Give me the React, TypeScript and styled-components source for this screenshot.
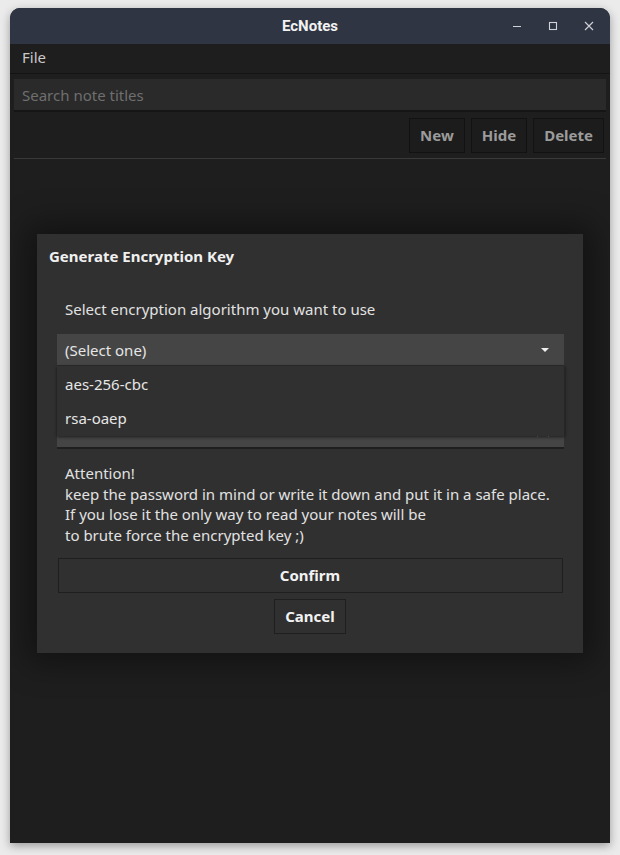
import React from "react";
import styled, { createGlobalStyle } from "styled-components";

const Global = createGlobalStyle`
  html, body { margin: 0; padding: 0; background: #ebebeb; }
  * { box-sizing: border-box; }
  body { font-family: "Noto Sans", "Open Sans", sans-serif; }
`;

const Page = styled.div`
  width: 620px;
  height: 855px;
  padding: 8px 10px 12px 10px;
`;

const Window = styled.div`
  width: 600px;
  height: 835px;
  display: flex;
  flex-direction: column;
  border-radius: 10px 10px 0 0;
  overflow: hidden;
  background: #1e1e1e;
  box-shadow: 0 3px 10px rgba(0, 0, 0, 0.35);
`;

const TitleBar = styled.div`
  height: 36px;
  flex: none;
  background: #303544;
  display: grid;
  grid-template-columns: 1fr auto 1fr;
  align-items: center;
`;

const Title = styled.div`
  grid-column: 2;
  font-family: Roboto, "Noto Sans", sans-serif;
  font-weight: 700;
  font-size: 15px;
  color: #f2f2f2;
`;

const Controls = styled.div`
  grid-column: 3;
  justify-self: end;
  display: flex;
  align-items: center;
  gap: 20px;
  padding-right: 13px;
`;

const CtrlIcon = styled.svg`
  width: 16px;
  height: 16px;
  display: block;
`;

const MenuBar = styled.div`
  height: 30px;
  flex: none;
  display: flex;
  align-items: center;
  padding: 0 0 3px 12px;
  border-bottom: 1px solid #141414;
  font-size: 15px;
  color: #c9c9c9;
`;

const Body = styled.div`
  flex: 1;
  display: flex;
  flex-direction: column;
  padding: 5px 4px 0 4px;
`;

const Search = styled.div`
  height: 33px;
  background: #2a2a2a;
  border-bottom: 2px solid #151515;
  display: flex;
  align-items: center;
  padding-left: 8px;
  font-size: 15px;
  color: #6f6f6f;
`;

const Toolbar = styled.div`
  display: flex;
  justify-content: flex-end;
  gap: 6px;
  padding: 6px 2px 0 0;
`;

const ToolButton = styled.div`
  height: 35px;
  display: flex;
  align-items: center;
  padding: 0 10px 1px;
  background: #1c1c1c;
  border: 1px solid #121212;
  font-size: 15px;
  font-weight: 700;
  color: #9b9b9b;
`;

const Separator = styled.div`
  height: 1px;
  background: #3a3a3a;
  margin-top: 5px;
`;

const Content = styled.div`
  flex: 1;
  display: flex;
  justify-content: center;
  padding-top: 75px;
`;

const Modal = styled.div`
  width: 546px;
  height: 419px;
  background: #303030;
  box-shadow: 0 0 30px 10px rgba(0, 0, 0, 0.4);
  padding: 12px 0 0 0;
  display: flex;
  flex-direction: column;
`;

const ModalTitle = styled.div`
  font-size: 15px;
  line-height: 20px;
  font-weight: 700;
  color: #f0f0f0;
  padding-left: 12px;
`;

const Form = styled.div`
  display: flex;
  flex-direction: column;
  padding: 33px 19px 0 20px;
`;

const Text = styled.div`
  font-size: 15px;
  line-height: 20px;
  color: #e2e2e2;
  padding-left: 8px;
`;

const SelectWrap = styled.div`
  position: relative;
  margin-top: 15px;
`;

const SelectBox = styled.div`
  height: 32px;
  background: #454545;
  border-bottom: 1px solid #2c2c2c;
  display: flex;
  align-items: center;
  justify-content: space-between;
  padding: 0 14px 0 8px;
  font-size: 15px;
  color: #e6e6e6;
`;

const Caret = styled.svg`
  width: 10px;
  height: 6px;
  display: block;
`;

const Dropdown = styled.div`
  position: absolute;
  left: 0;
  right: -1px;
  top: 32px;
  height: 70px;
  background: #303030;
  box-shadow: 0 1px 3px rgba(0, 0, 0, 0.6);
  border-right: 1px solid #262626;
  z-index: 2;
  display: flex;
  flex-direction: column;
  padding-top: 1px;
`;

const Option = styled.div`
  height: 34px;
  display: flex;
  align-items: center;
  padding-left: 8px;
  font-size: 15px;
  color: #e6e6e6;
`;

const PasswordField = styled.div`
  height: 32px;
  margin-top: 51px;
  background: #454545;
  border-bottom: 2px solid #1f1f1f;
  display: flex;
  align-items: flex-end;
  justify-content: flex-end;
  padding: 0 14px 6px 0;
`;

const Notice = styled(Text)`
  margin-top: 14px;
  line-height: 20.7px;
`;

const Buttons = styled.div`
  display: flex;
  flex-direction: column;
  align-items: center;
  gap: 6px;
  margin-top: 12px;
`;

const DialogButton = styled.div<{ $wide?: boolean }>`
  height: 35px;
  width: ${(p) => (p.$wide ? "505px" : "auto")};
  padding: 0 10px 1px;
  display: flex;
  align-items: center;
  justify-content: center;
  background: #303030;
  border: 1px solid #1f1f1f;
  font-size: 15px;
  font-weight: 700;
  color: #f2f2f2;
`;

export default function App() {
  return (
    <>
      <Global />
      <Page>
        <Window>
          <TitleBar>
            <Title>EcNotes</Title>
            <Controls>
              <CtrlIcon viewBox="0 0 16 16">
                <path d="M4 8.5h8" stroke="#cfd2d8" strokeWidth="1.2" />
              </CtrlIcon>
              <CtrlIcon viewBox="0 0 16 16">
                <rect x="4.5" y="4.5" width="7" height="7" fill="none" stroke="#cfd2d8" strokeWidth="1.1" />
              </CtrlIcon>
              <CtrlIcon viewBox="0 0 16 16">
                <path d="M4 4l8 8M12 4l-8 8" stroke="#cfd2d8" strokeWidth="1.1" />
              </CtrlIcon>
            </Controls>
          </TitleBar>
          <MenuBar>File</MenuBar>
          <Body>
            <Search>Search note titles</Search>
            <Toolbar>
              <ToolButton>New</ToolButton>
              <ToolButton>Hide</ToolButton>
              <ToolButton>Delete</ToolButton>
            </Toolbar>
            <Separator />
            <Content>
              <Modal>
                <ModalTitle>Generate Encryption Key</ModalTitle>
                <Form>
                  <Text>Select encryption algorithm you want to use</Text>
                  <SelectWrap>
                    <SelectBox>
                      <span>(Select one)</span>
                      <Caret viewBox="0 0 10 6">
                        <path d="M1 1h8L5 5z" fill="#f0f0f0" />
                      </Caret>
                    </SelectBox>
                    <Dropdown>
                      <Option>aes-256-cbc</Option>
                      <Option>rsa-oaep</Option>
                    </Dropdown>
                    <PasswordField>
                      <svg width="14" height="14" viewBox="0 0 14 14">
                        <path d="M1 9c3 -3 9 -3 12 0" fill="none" stroke="#d8d8d8" strokeWidth="1.3" />
                      </svg>
                    </PasswordField>
                  </SelectWrap>
                  <Notice>
                    Attention!
                    <br />
                    keep the password in mind or write it down and put it in a safe place.
                    <br />
                    If you lose it the only way to read your notes will be
                    <br />
                    to brute force the encrypted key ;)
                  </Notice>
                </Form>
                <Buttons>
                  <DialogButton $wide>Confirm</DialogButton>
                  <DialogButton>Cancel</DialogButton>
                </Buttons>
              </Modal>
            </Content>
          </Body>
        </Window>
      </Page>
    </>
  );
}
